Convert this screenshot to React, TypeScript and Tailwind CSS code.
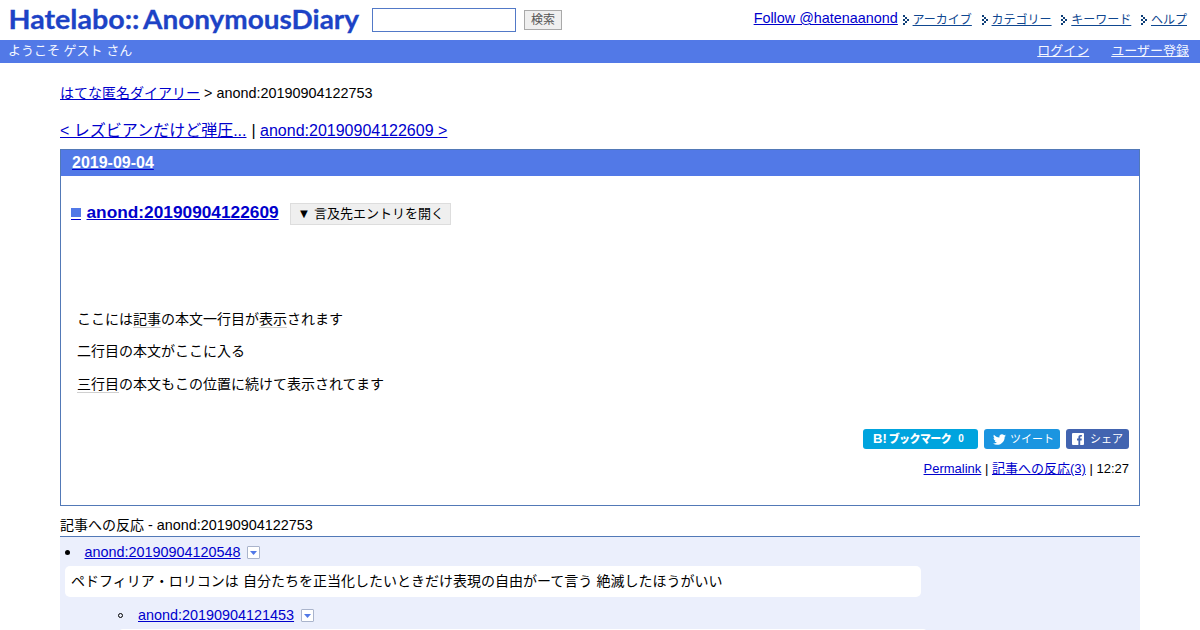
import { ReactNode } from "react";

const menuItems = ["アーカイブ", "カテゴリー", "キーワード", "ヘルプ"];

const Keyword = ({ children }: { children: ReactNode }) => (
	<span className="border-b border-[#d0d0d0]">{children}</span>
);

const MenuArrow = () => (
	<svg width="7" height="10" viewBox="0 0 7 10" fill="#0f3f78" shapeRendering="crispEdges">
		<path d="M0 0h2v2H0zM2 2h2v2H2zM4 4h2v2H4zM2 6h2v2H2zM0 8h2v2H0zM0 4h2v2H0z" />
	</svg>
);

const DropIcon = () => (
	<span className="flex h-[13px] w-[13px] items-center justify-center rounded-[1px] border border-[#aab4cc] bg-white">
		<svg width="7" height="4" viewBox="0 0 7 4" fill="#5279e7">
			<path d="M0 0h7L3.5 4z" />
		</svg>
	</span>
);

const Logo = () => (
	<svg width="372" height="40" className="shrink-0" fill="#1d43c6" stroke="#1d43c6" strokeWidth="0.3">
		<text x="8.5" y="29" fontSize="27.5" fontWeight="700" textLength="131" lengthAdjust="spacingAndGlyphs" className="font-['Lato',sans-serif]">
			Hatelabo::
		</text>
		<text x="143" y="29" fontSize="27.5" fontWeight="700" textLength="216" lengthAdjust="spacingAndGlyphs" className="font-['Lato',sans-serif]">
			AnonymousDiary
		</text>
	</svg>
);

const Header = () => (
	<header>
		<div className="flex h-10">
			<Logo />
			<input className="mt-2 h-6 w-36 border border-[#5279c7] bg-white" />
			<button className="mt-[10px] ml-2 h-5 w-[38px] border border-[#a9a9a9] bg-[#efefef] text-[12px] leading-[17px] text-[#555]">
				検索
			</button>
			<div className="mr-[13px] ml-auto flex">
				<a className="mt-[9px] mr-[5px] text-[14.4px] leading-[18px] text-[#0000cc] underline">
					Follow @hatenaanond
				</a>
				<ul className="mt-[11px] flex gap-[10px] text-[12px] leading-[18px]">
					{menuItems.map((item) => (
						<li key={item} className="flex">
							<span className="mt-1 mr-[3px] ml-[-0.3px]">
								<MenuArrow />
							</span>
							<a className="text-[#0f4790] underline">{item}</a>
						</li>
					))}
				</ul>
			</div>
		</div>
		<div className="flex h-[23px] bg-[#5279e7] pr-[11px] pl-2 text-[13px] leading-[22px] text-[#f4f7ff]">
			<span>ようこそ ゲスト さん</span>
			<a className="ml-auto underline">ログイン</a>
			<a className="ml-[22px] underline">ユーザー登録</a>
		</div>
	</header>
);

const ShareButtons = () => (
	<div className="flex justify-end gap-[6px] text-[11px] leading-5 text-white">
		<a className="flex h-5 w-[115px] rounded-[3px] bg-[#00a4de] pl-[10px] font-bold">
			<span className="text-[13px] font-black">B!</span>
			<span className="ml-[2px] font-black tracking-[-0.6px]">ブックマーク</span>
			<span className="ml-[7px] text-[10px]">0</span>
		</a>
		<a className="flex h-5 w-[76px] items-center rounded-[3px] bg-[#1b95e0] pl-[9px]">
			<svg width="13" height="13" viewBox="0 1 24 22" fill="white">
				<path d="M23.953 4.57a10 10 0 0 1-2.825.775 4.958 4.958 0 0 0 2.163-2.723c-.951.555-2.005.959-3.127 1.184a4.92 4.92 0 0 0-8.384 4.482C7.69 8.095 4.067 6.13 1.64 3.162a4.822 4.822 0 0 0-.666 2.475c0 1.71.87 3.213 2.188 4.096a4.904 4.904 0 0 1-2.228-.616v.06a4.923 4.923 0 0 0 3.946 4.827 4.996 4.996 0 0 1-2.212.085 4.936 4.936 0 0 0 4.604 3.417 9.867 9.867 0 0 1-6.102 2.105c-.39 0-.779-.023-1.17-.067a13.995 13.995 0 0 0 7.557 2.209c9.053 0 13.998-7.496 13.998-13.985 0-.21 0-.42-.015-.63A9.935 9.935 0 0 0 24 4.59z" />
			</svg>
			<span className="ml-1">ツイート</span>
		</a>
		<a className="flex h-5 w-[63px] items-center rounded-[3px] bg-[#4264b0] pl-[6px]">
			<svg width="12" height="12" viewBox="0 0 12 12">
				<rect width="12" height="12" rx="1" fill="white" />
				<path d="M6.4 12V7.4H5V5.6h1.4V4.2C6.4 2.7 7.3 2 8.6 2h1.3v1.6H9c-.6 0-.8.3-.8.8v1.2h1.6l-.2 1.8H8.2V12z" fill="#4264b0" />
			</svg>
			<span className="ml-[6px]">シェア</span>
		</a>
	</div>
);

const Entry = () => (
	<section className="mt-2 h-[357px] border border-[#5279b7]">
		<h2 className="h-[26px] bg-[#5279e7] pl-[11px] text-[16px] leading-[25px] font-bold">
			<a className="text-white underline decoration-[#0000cc]">2019-09-04</a>
		</h2>
		<div className="px-[10px]">
			<div className="mt-[27px] flex h-[22px]">
				<a className="flex h-[17px] w-[10px] items-end border-b border-[#0000cc]">
					<span className="mb-[2px] h-[9px] w-[10px] bg-[#5279e7]" />
				</a>
				<a className="ml-[5.5px] text-[17.3px] leading-[19px] font-bold text-[#0000cc] underline">
					anond:20190904122609
				</a>
				<button className="ml-[11.5px] h-[22px] w-[161px] border border-[#ddd] bg-[#efefef] text-[13px] leading-5 whitespace-nowrap">
					▼ 言及先エントリを開く
				</button>
			</div>
			<div className="mt-[84px] ml-[6px] text-[14px] leading-[20px]">
				<p>
					ここには<Keyword>記事</Keyword>の本文一行目が<Keyword>表示</Keyword>されます
				</p>
				<p className="mt-[12px]">二行目の本文がここに入る</p>
				<p className="mt-[13px]">
					<Keyword>三行目</Keyword>の本文もこの位置に続けて表示されてます
				</p>
			</div>
			<div className="mt-[35px]">
				<ShareButtons />
			</div>
			<p className="mt-[10px] text-right text-[13px] leading-[19px]">
				<a className="text-[#0000cc] underline">Permalink</a> |{" "}
				<a className="text-[#0000cc] underline">記事への反応(3)</a> | 12:27
			</p>
		</div>
	</section>
);

const Reactions = () => (
	<section className="mt-[9px]">
		<h3 className="h-[21px] text-[14.4px] leading-[20px]">
			<span className="text-[14px]">記事への反応</span> - anond:20190904122753
		</h3>
		<div className="h-[94px] overflow-hidden border-t border-[#5279b7] bg-[#ebeffc] text-[14.4px]">
			<div className="flex h-[29px] items-center pt-[2px] pl-[5px]">
				<span className="h-[5px] w-[5px] rounded-full bg-black" />
				<a className="ml-[14.5px] text-[#0000cc] underline">anond:20190904120548</a>
				<span className="ml-[6px]">
					<DropIcon />
				</span>
			</div>
			<p className="ml-[5px] h-[31px] w-[856px] rounded-[5px] bg-white pl-[6px] text-[14px] leading-[30px] whitespace-nowrap [word-spacing:0.4px]">
				ペドフィリア・ロリコンは 自分たちを正当化したいときだけ表現の自由がーて言う 絶滅したほうがいい
			</p>
			<div className="mt-[3px] flex h-[29px] items-center pt-[2px] pl-[58px]">
				<span className="h-[5px] w-[5px] rounded-full border border-black" />
				<a className="ml-[15px] text-[#0000cc] underline">anond:20190904121453</a>
				<span className="ml-[7px]">
					<DropIcon />
				</span>
			</div>
			<div className="ml-[58px] h-[31px] w-[810px] rounded-[5px] bg-white" />
		</div>
	</section>
);

export default function App() {
	return (
		<div className="h-[630px] w-[1200px] overflow-hidden bg-white font-['Liberation_Sans','Noto_Sans_CJK_JP',sans-serif] text-black">
			<Header />
			<main className="mx-[60px]">
				<p className="mt-5 text-[14.4px] leading-[20px]">
					<a className="text-[14px] text-[#0000cc] underline">はてな匿名ダイアリー</a> &gt; anond:20190904122753
				</p>
				<p className="mt-[18px] text-[16px] leading-[20px]">
					<a className="text-[#0000cc] underline">&lt; レズビアンだけど弾圧...</a>
					<span className="ml-[0.5px]"> | </span>
					<a className="text-[#0000cc] underline">anond:20190904122609 &gt;</a>
				</p>
				<Entry />
				<Reactions />
			</main>
		</div>
	);
}
